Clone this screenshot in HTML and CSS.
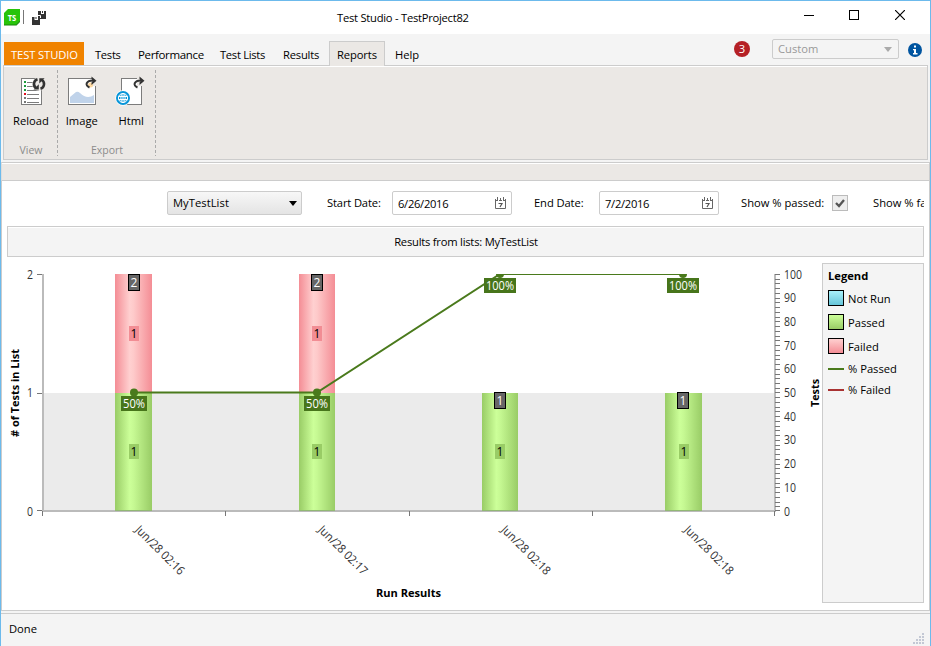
FILE: index.html
```html
<!DOCTYPE html>
<html lang="en">
<head>
<meta charset="utf-8">
<title>Test Studio - TestProject82</title>
<link rel="stylesheet" href="styles.css">
</head>
<body>
<div class="window">
  <header class="titlebar">
    <svg class="app-logo" width="16" height="17" viewBox="0 0 16 17"><path d="M4 0H16V12L12 16H0V4Z" fill="#28c40a"/><path d="M0 15.5H12L16 11.500V13L12.500 16.500H0Z" fill="#16860a"/><text x="3.700" y="11.500" textLength="8.600" lengthAdjust="spacingAndGlyphs" class="logo-text">TS</text></svg>
    <span class="title-sep"></span>
    <svg class="save-all" width="15" height="16" viewBox="0 0 15 16"><g fill="#333"><path d="M6 1H14V9H8L6 7Z"/><path d="M0 7H8V15H0Z"/></g><path d="M9 1H12V4H9ZM2.500 7H6V10H2.500Z" fill="#fff"/><path d="M10 1H11V3H10ZM3.500 7H4.500V9H3.500Z" fill="#333"/><path d="M5 5.500H8.500V8" stroke="#fff" fill="none"/></svg>
    <h1 class="title">Test Studio - TestProject82</h1>
    <div class="caption-buttons">
      <svg width="10" height="10" viewBox="0 0 10 10"><path d="M0 5.500H10" stroke="#000"/></svg>
      <svg width="10" height="10" viewBox="0 0 10 10"><rect x=".5" y=".5" width="9" height="9" fill="none" stroke="#000"/></svg>
      <svg width="10" height="10" viewBox="0 0 10 10"><path d="M0 0L10 10M10 0L0 10" stroke="#000" stroke-width="1.200"/></svg>
    </div>
  </header>

  <nav class="tabs">
    <span class="tab app">TEST STUDIO</span>
    <span class="tab tests">Tests</span>
    <span class="tab perf">Performance</span>
    <span class="tab lists">Test Lists</span>
    <span class="tab results">Results</span>
    <span class="tab active">Reports</span>
    <span class="tab help">Help</span>
    <span class="badge">3</span>
    <span class="layout-select">Custom<i class="caret"></i></span>
    <svg class="info" width="14" height="14" viewBox="0 0 14 14"><circle cx="7" cy="7" r="7" fill="#0055a0"/><path d="M6 2.500H8V4.500H6ZM5 6H8V10H9.500V11.500H5V10H6V7.200H5Z" fill="#fff"/></svg>
  </nav>

  <section class="ribbon">
    <div class="group view">
      <div class="tools">
        <div class="tool reload">
          <svg width="26" height="30" viewBox="0 0 26 30"><rect x="1.500" y="2.500" width="20" height="26" fill="#fff" stroke="#7c7c7c"/><path d="M4 5H6V7H4ZM4 9H6V11H4ZM4 13H6V15H4Z" fill="#1d9a3c"/><path d="M4 17H6V19H4Z" fill="#e01020"/><path d="M4 21H6V23H4ZM4 25H6V27H4Z" fill="#777"/><path d="M7 6.500H14M7 10.500H13M7 14.500H19M7 18.500H19M7 22.500H19M7 26.500H19" stroke="#7c7c7c"/><circle cx="19" cy="8" r="6.800" fill="#ebe8e5"/><path d="M17.500 3.200A5 5 0 0 0 16 12M20.500 12.800A5 5 0 0 0 22 4" fill="none" stroke="#333" stroke-width="2.600"/><path d="M13 14V9.500L19 8.500V14ZM19.500 2H25.500L19.500 7.500Z" fill="none"/><path d="M13.500 13.500H18.800V8.200ZM19.300 2.300H24.600L19.300 7.600Z" fill="#333"/></svg>
          <span>Reload</span>
        </div>
      </div>
      <div class="caption">View</div>
    </div>
    <div class="group export">
      <div class="tools">
        <div class="tool image">
          <svg width="30" height="30" viewBox="0 0 30 30"><rect x="1.500" y="2.500" width="27" height="26" fill="#fff" stroke="#7c7c7c"/><path d="M3 27V21L9 16Q11 15 13 17Q20 24 27 19V27Z" fill="#c0d3ea"/><path d="M25 1H30V10H25Z" fill="#ebe8e5"/><circle cx="23.500" cy="9" r="2.500" fill="#ffd9a0"/><path d="M22.500 11.500C17.500 9.500 19 4.500 26 4.500" fill="none" stroke="#333" stroke-width="2"/><path d="M24.500 0.500L29.500 4.700L24.500 9V6.500L26 4.700L24.500 3Z" fill="#333"/></svg>
          <span>Image</span>
        </div>
        <div class="tool html">
          <svg width="30" height="30" viewBox="0 0 30 30"><rect x="6.500" y="2.500" width="20" height="26" fill="#fff" stroke="#7c7c7c"/><path d="M22 1H29V10H22Z" fill="#ebe8e5"/><circle cx="8" cy="22" r="7.700" fill="#fff"/><circle cx="8" cy="22" r="7" fill="#0795d8"/><g fill="none" stroke="#fff"><circle cx="8" cy="22" r="4.600"/><ellipse cx="8" cy="22" rx="2.100" ry="4.600"/><path d="M8 17.500V26.500M3.500 20.500H12.500M3.500 23.500H12.500"/></g><path d="M22.500 11.500C17.500 9.500 19 4.500 26 4.500" fill="none" stroke="#333" stroke-width="2"/><path d="M24.500 0.500L29.500 4.700L24.500 9V6.500L26 4.700L24.500 3Z" fill="#333"/></svg>
          <span>Html</span>
        </div>
      </div>
      <div class="caption">Export</div>
    </div>
  </section>
  <div class="strip"></div>

  <main class="content">
    <div class="filters">
      <span class="list-select">MyTestList<i class="caret"></i></span>
      <label class="start">Start Date:</label>
      <span class="date">6/26/2016<svg width="11" height="12" viewBox="0 0 11 12"><path d="M.5 2V11.500H10.500V2M0 3.500H3M4 3.500H7M8 3.500H11M2.500 0V3M8.500 0V3M5.500 1V3" fill="none" stroke="#666"/><path d="M3.500 6.500H7L5 10" fill="none" stroke="#555" stroke-width="1.200"/></svg></span>
      <label class="end">End Date:</label>
      <span class="date">7/2/2016<svg width="11" height="12" viewBox="0 0 11 12"><path d="M.5 2V11.500H10.500V2M0 3.500H3M4 3.500H7M8 3.500H11M2.500 0V3M8.500 0V3M5.500 1V3" fill="none" stroke="#666"/><path d="M3.500 6.500H7L5 10" fill="none" stroke="#555" stroke-width="1.200"/></svg></span>
      <label class="passed">Show % passed:</label>
      <span class="check"><svg width="10" height="9" viewBox="0 0 10 9"><path d="M1 4L4 7L9 1" fill="none" stroke="#555" stroke-width="2.300"/></svg></span>
      <label class="failed">Show % failed:</label>
    </div>
    <h2 class="heading">Results from lists: MyTestList</h2>
    <div class="report">
      <svg class="chart" width="820" height="352" viewBox="2 258 820 352">
        <defs>
          <linearGradient id="green"><stop offset="0" stop-color="#99cc66"/><stop offset=".4" stop-color="#ccff99"/><stop offset=".5" stop-color="#c6f993"/><stop offset="1" stop-color="#99cc66"/></linearGradient>
          <linearGradient id="red"><stop offset="0" stop-color="#f48d95"/><stop offset=".4" stop-color="#ffd0d0"/><stop offset=".5" stop-color="#fecaca"/><stop offset="1" stop-color="#f48d95"/></linearGradient>
          <clipPath id="plot"><rect x="42" y="274" width="734" height="238"/></clipPath>
        </defs>
        <rect x="44" y="393" width="730" height="118" fill="#ebebeb"/>
        <g fill="url(#red)"><rect x="115" y="274" width="37" height="119"/><rect x="299" y="274" width="36" height="119"/></g>
        <path d="M42 510H776V512H42ZM42 274H44V512H42ZM774 274H776V512H774Z" fill="#bbb"/>
        <g fill="url(#green)"><rect x="115" y="393" width="37" height="118"/><rect x="299" y="393" width="36" height="118"/><rect x="482" y="393" width="36" height="118"/><rect x="665" y="393" width="37" height="118"/></g>
        <path d="M115 510.500H152M299 510.500H335M482 510.500H518M665 510.500H702" stroke="#92b874"/>
        <path d="M37 274.500H42M37 393.500H42M37 510.500H42M42.500 511V516M225.500 511V516M409.500 511V516M592.500 511V516M774.500 511V516" stroke="#777"/>
        <path stroke="#777" d="M775 274.500h5M775 279.500h5M775 283.500h5M775 288.500h5M775 293.500h5M775 298.500h5M775 302.500h5M775 307.500h5M775 312.500h5M775 317.500h5M775 321.500h5M775 326.500h5M775 331.500h5M775 336.500h5M775 340.500h5M775 345.500h5M775 350.500h5M775 355.500h5M775 359.500h5M775 364.500h5M775 369.500h5M775 374.500h5M775 378.500h5M775 383.500h5M775 388.500h5M775 392.500h5M775 397.500h5M775 402.500h5M775 407.500h5M775 411.500h5M775 416.500h5M775 421.500h5M775 426.500h5M775 430.500h5M775 435.500h5M775 440.500h5M775 445.500h5M775 449.500h5M775 454.500h5M775 459.500h5M775 464.500h5M775 468.500h5M775 473.500h5M775 478.500h5M775 483.500h5M775 487.500h5M775 492.500h5M775 497.500h5M775 502.500h5M775 506.500h5M775 510.500h5"/>
        <g clip-path="url(#plot)" fill="#4a7a1c">
          <path d="M134 392.500H317L500 274H683" fill="none" stroke="#4a7a1c" stroke-width="2"/>
          <circle cx="134" cy="392.500" r="4"/><circle cx="317" cy="392.500" r="4"/><circle cx="500" cy="274" r="4"/><circle cx="683" cy="274" r="4"/>
        </g>
        <g fill="#f28d94"><rect x="129" y="326" width="10" height="15"/><rect x="312" y="326" width="10" height="15"/></g>
        <g fill="#99cc66"><rect x="129" y="444" width="10" height="15"/><rect x="312" y="444" width="10" height="15"/><rect x="495" y="444" width="10" height="15"/><rect x="679" y="444" width="10" height="15"/></g>
        <g fill="#666" stroke="#000"><rect x="128.500" y="274.500" width="11" height="16"/><rect x="311.500" y="274.500" width="11" height="16"/><rect x="494.500" y="392.500" width="11" height="16"/><rect x="677.500" y="392.500" width="11" height="16"/></g>
        <g fill="#47751b"><rect x="121" y="396" width="26" height="15"/><rect x="304" y="396" width="26" height="15"/><rect x="484" y="278" width="32" height="15"/><rect x="667" y="278" width="32" height="15"/></g>
        <g class="num mid"><text x="134" y="338">1</text><text x="317" y="338">1</text><text x="134" y="456">1</text><text x="317" y="456">1</text><text x="500" y="456">1</text><text x="684" y="456">1</text></g>
        <g class="num mid light"><text x="134" y="287">2</text><text x="317" y="287">2</text><text x="500" y="405">1</text><text x="683" y="405">1</text>
          <text x="134" y="408" textLength="22" lengthAdjust="spacingAndGlyphs">50%</text><text x="317" y="408" textLength="22" lengthAdjust="spacingAndGlyphs">50%</text><text x="500" y="290" textLength="28" lengthAdjust="spacingAndGlyphs">100%</text><text x="683" y="290" textLength="28" lengthAdjust="spacingAndGlyphs">100%</text></g>
        <g class="num axis"><text x="27" y="279" textLength="6" lengthAdjust="spacingAndGlyphs">2</text><text x="27" y="397" textLength="6" lengthAdjust="spacingAndGlyphs">1</text><text x="27" y="516" textLength="6" lengthAdjust="spacingAndGlyphs">0</text>
          <text x="784" y="279" textLength="18" lengthAdjust="spacingAndGlyphs">100</text><text x="784" y="302" textLength="12" lengthAdjust="spacingAndGlyphs">90</text><text x="784" y="326" textLength="12" lengthAdjust="spacingAndGlyphs">80</text><text x="784" y="350" textLength="12" lengthAdjust="spacingAndGlyphs">70</text><text x="784" y="373" textLength="12" lengthAdjust="spacingAndGlyphs">60</text><text x="784" y="397" textLength="12" lengthAdjust="spacingAndGlyphs">50</text><text x="784" y="421" textLength="12" lengthAdjust="spacingAndGlyphs">40</text><text x="784" y="444" textLength="12" lengthAdjust="spacingAndGlyphs">30</text><text x="784" y="468" textLength="12" lengthAdjust="spacingAndGlyphs">20</text><text x="784" y="492" textLength="12" lengthAdjust="spacingAndGlyphs">10</text><text x="784" y="516" textLength="6" lengthAdjust="spacingAndGlyphs">0</text></g>
        <g class="num axis"><text transform="translate(134.500 530.500) rotate(45)" textLength="64" lengthAdjust="spacingAndGlyphs">Jun/28 02:16</text><text transform="translate(317.500 530.500) rotate(45)" textLength="64" lengthAdjust="spacingAndGlyphs">Jun/28 02:17</text><text transform="translate(500.500 530.500) rotate(45)" textLength="64" lengthAdjust="spacingAndGlyphs">Jun/28 02:18</text><text transform="translate(683.500 530.500) rotate(45)" textLength="64" lengthAdjust="spacingAndGlyphs">Jun/28 02:18</text></g>
        <g class="axis-title"><text transform="translate(19 437) rotate(-90)" textLength="88" lengthAdjust="spacingAndGlyphs"># of Tests in List</text><text transform="translate(819 407) rotate(-90)" textLength="28" lengthAdjust="spacingAndGlyphs">Tests</text><text x="376" y="597" textLength="65" lengthAdjust="spacingAndGlyphs">Run Results</text></g>
      </svg>
      <aside class="legend">
        <h3>Legend</h3>
        <div class="key"><i class="swatch blue"></i><span>Not Run</span></div>
        <div class="key"><i class="swatch green"></i><span>Passed</span></div>
        <div class="key"><i class="swatch red"></i><span>Failed</span></div>
        <div class="key line"><i class="dash pass"></i>% Passed</div>
        <div class="key line"><i class="dash fail"></i>% Failed</div>
      </aside>
    </div>
  </main>

  <footer class="status">
    <span>Done</span>
    <svg class="grip" width="12" height="12" viewBox="0 0 12 12"><path d="M9 0h2v2h-2zM6 3h2v2h-2zM9 3h2v2h-2zM3 6h2v2h-2zM6 6h2v2h-2zM9 6h2v2h-2zM0 9h2v2h-2zM3 9h2v2h-2zM6 9h2v2h-2zM9 9h2v2h-2z" fill="#c3c8d4"/></svg>
  </footer>
</div>
</body>
</html>
```
FILE: styles.css
```css
* { box-sizing: border-box; }
body { margin: 0; background: #fff; color: #000; font: 11.2px/16px "Open Sans", "Noto Sans", sans-serif; overflow: hidden; }
h1, h2, h3 { margin: 0; font-size: inherit; font-weight: 400; }
svg { display: block; flex: none; }
span, label { white-space: nowrap; }

.window { width: 931px; height: 646px; display: flex; flex-direction: column; border: 1px solid #6cbaec; border-bottom: 0; background: #f4f4f4; }

.titlebar { height: 33px; flex: none; display: flex; background: #fff; padding-left: 3px; }
.app-logo { margin-top: 8px; }
.logo-text { font: 700 8px "Open Sans", sans-serif; fill: #fff; }
.title-sep { width: 1px; height: 14px; margin: 9px 0 0 3px; background: #777; }
.save-all { margin: 9px 0 0 8px; }
.title { width: 133px; margin: 9px 0 0 290px; white-space: nowrap; letter-spacing: -.25px; }
.caption-buttons { display: flex; gap: 35px; margin: 9px 25px 0 auto; }
.caption-buttons svg:last-child { margin-left: 1px; }

.tabs { height: 31px; flex: none; display: flex; align-items: flex-end; padding: 0 8px 0 3px; }
.tab { height: 23px; line-height: 25px; padding-left: 11px; }
.tab.app { width: 80px; padding-left: 7px; background: #f08300; color: #fff; letter-spacing: -.1px; }
.tab.tests { width: 43px; letter-spacing: -.3px; }
.tab.perf { width: 82px; letter-spacing: -.35px; font-size: 11.5px; }
.tab.lists { width: 63px; letter-spacing: -.3px; }
.tab.results { width: 57px; letter-spacing: -.2px; }
.tab.active { width: 56px; height: 25px; padding-left: 7px; margin-bottom: -1px; border: 1px solid #ccc; border-bottom: 0; background: #ebe8e5; z-index: 1; letter-spacing: -.1px; }
.tab.help { width: 50px; padding-left: 10px; }
.badge { width: 16px; height: 16px; margin: 0 22px 8px auto; border-radius: 50%; background: #b52025; color: #fff; text-align: center; line-height: 16px; }
.layout-select { width: 127px; height: 20px; margin: 0 9px 6px 0; padding: 0 6px 0 5px; border: 1px solid #ccc; border-radius: 2px; color: #999; display: flex; justify-content: space-between; align-items: center; }
.caret { border: 4px solid transparent; border-top: 5px solid currentColor; border-bottom: 0; }
.layout-select .caret { border-top-color: #aaa; }
.info { margin-bottom: 8px; }

.ribbon { height: 95px; flex: none; margin: 0 2px; border: 1px solid #ccc; background: #ebe8e5; box-shadow: inset 0 1px #fff; display: flex; padding-top: 4px; }
.group { height: 86px; display: flex; flex-direction: column; background: repeating-linear-gradient(#aaa 0 3px, transparent 3px 5px) right / 1px 100% no-repeat; }
.group.view { width: 54px; }
.group.export { width: 98px; }
.tools { display: flex; flex: none; height: 72px; padding-top: 6px; }
.tool { flex: 1; display: flex; flex-direction: column; align-items: center; gap: 7px; }
.reload svg { margin-left: 4px; }
.image { padding-right: 2px; }
.html { padding-right: 1px; }
.html svg { margin-right: 3px; }
.caption { color: #8c8c8c; text-align: center; font-size: 10.5px; }
.strip { height: 19px; flex: none; margin-top: 2px; border: 1px solid #ccc; border-left-color: #ddd; background: #ebe8e5; box-shadow: inset 0 1px #fff; }

.content { height: 430px; flex: none; background: #fff; border: 1px solid #ccc; border-top: 0; padding: 0 5px; overflow: hidden; }
.filters { height: 45px; display: flex; align-items: center; padding: 0 0 1px 160px; width: 917px; overflow: hidden; }
.filters > * { flex: none; }
.list-select, .date { height: 24px; border: 1px solid #ccc; border-radius: 2px; display: flex; align-items: center; justify-content: space-between; }
.list-select { width: 135px; padding: 0 4px 0 5px; background: linear-gradient(#f7f7f7, #e4e4e4); letter-spacing: .05px; }
.date { width: 120px; padding: 2px 4px 0 5px; letter-spacing: -.3px; }
.date svg { margin: 0 1px 2px 0; }
.start { width: 65px; margin-left: 25px; letter-spacing: -.15px; }
.end { width: 65px; margin-left: 22px; letter-spacing: -.1px; }
.passed { width: 91px; margin-left: 22px; }
.check { width: 16px; height: 16px; border: 1px solid #bbb; background: #eee; display: flex; align-items: center; justify-content: center; }
.failed { margin-left: 25px; }
.heading { height: 31px; border: 1px solid #ccc; background: #f4f4f4; box-shadow: inset 0 1px #fff; text-align: center; line-height: 30px; letter-spacing: -.22px; padding-left: 1px; }
.report { display: flex; height: 352px; margin: 1px 0 0 -5px; }
.num { font: 12px "Open Sans", sans-serif; }
.mid { text-anchor: middle; }
.light { fill: #fff; }
.axis { fill: #333; }
.axis-title { font: 700 11.2px "Open Sans", sans-serif; }
.legend { width: 102px; height: 340px; margin-top: 5px; flex: none; border: 1px solid #ccc; background: #f4f4f4; padding: 4px 5px; }
.legend h3 { font-weight: 700; height: 18px; }
.key { display: flex; align-items: center; gap: 4px; height: 24px; }
.key span { padding-top: 2px; }
.swatch { width: 16px; height: 16px; border: 1px solid #000; }
.swatch.blue { background: linear-gradient(#a8f0fa, #66c5d9); }
.swatch.green { background: linear-gradient(#ccff99, #99cc66); }
.swatch.red { background: linear-gradient(#ffd0d0, #f48d95); }
.key.line { height: 21px; }
.dash { width: 16px; height: 2px; }
.dash.pass { background: #4a7a1c; }
.dash.fail { background: #a83232; }

.status { height: 34px; flex: none; margin-top: 2px; border-top: 1px solid #ccc; display: flex; justify-content: space-between; padding: 7px 5px 0 8px; }
.grip { margin-top: 12px; }
```
